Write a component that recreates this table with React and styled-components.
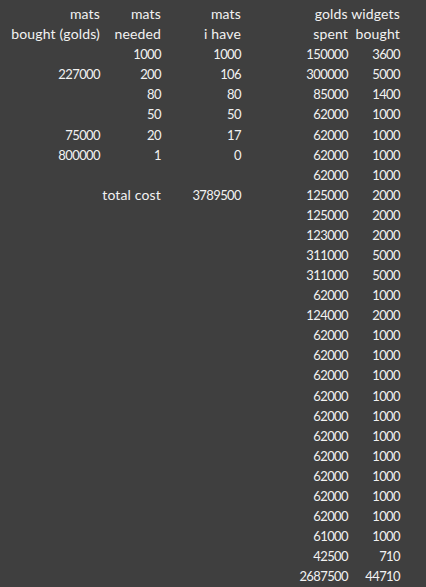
import React from 'react';
import styled, { createGlobalStyle } from 'styled-components';

const GlobalStyle = createGlobalStyle`
  html, body {
    margin: 0;
    padding: 0;
    background: #3f3f3f;
  }
`;

const Sheet = styled.div`
  display: grid;
  grid-template-columns: 103px 61px 80px 107px 52px;
  grid-auto-rows: 20.08px;
  padding-top: 4px;
  min-height: 587px;
  box-sizing: border-box;
  background: #3f3f3f;
  color: #f2f2f2;
  font-family: Lato, "Open Sans", sans-serif;
`;

const Cell = styled.div`
  display: flex;
  align-items: center;
  justify-content: flex-end;
  padding-right: 3px;
  white-space: nowrap;
  line-height: 20px;
  font-size: ${props => (props.$num ? '13px' : '14px')};
  letter-spacing: ${props => (props.$num ? '-0.6px' : '0.15px')};
`;

const rows = [
  ['mats', 'mats', 'mats', '', 'golds widgets'],
  ['bought (golds)', 'needed', 'i have', 'spent', 'bought'],
  ['', '1000', '1000', '150000', '3600'],
  ['227000', '200', '106', '300000', '5000'],
  ['', '80', '80', '85000', '1400'],
  ['', '50', '50', '62000', '1000'],
  ['75000', '20', '17', '62000', '1000'],
  ['800000', '1', '0', '62000', '1000'],
  ['', '', '', '62000', '1000'],
  ['', 'total cost', '3789500', '125000', '2000'],
  ['', '', '', '125000', '2000'],
  ['', '', '', '123000', '2000'],
  ['', '', '', '311000', '5000'],
  ['', '', '', '311000', '5000'],
  ['', '', '', '62000', '1000'],
  ['', '', '', '124000', '2000'],
  ...Array.from({ length: 10 }, () => ['', '', '', '62000', '1000']),
  ['', '', '', '61000', '1000'],
  ['', '', '', '42500', '710'],
  ['', '', '', '2687500', '44710'],
];

export default function App() {
  return (
    <>
      <GlobalStyle />
      <Sheet>
        {rows.map((row, r) =>
          row.map((value, c) => (
            <Cell key={`${r}-${c}`} $num={/^\d+$/.test(value)}>
              {value}
            </Cell>
          ))
        )}
      </Sheet>
    </>
  );
}
